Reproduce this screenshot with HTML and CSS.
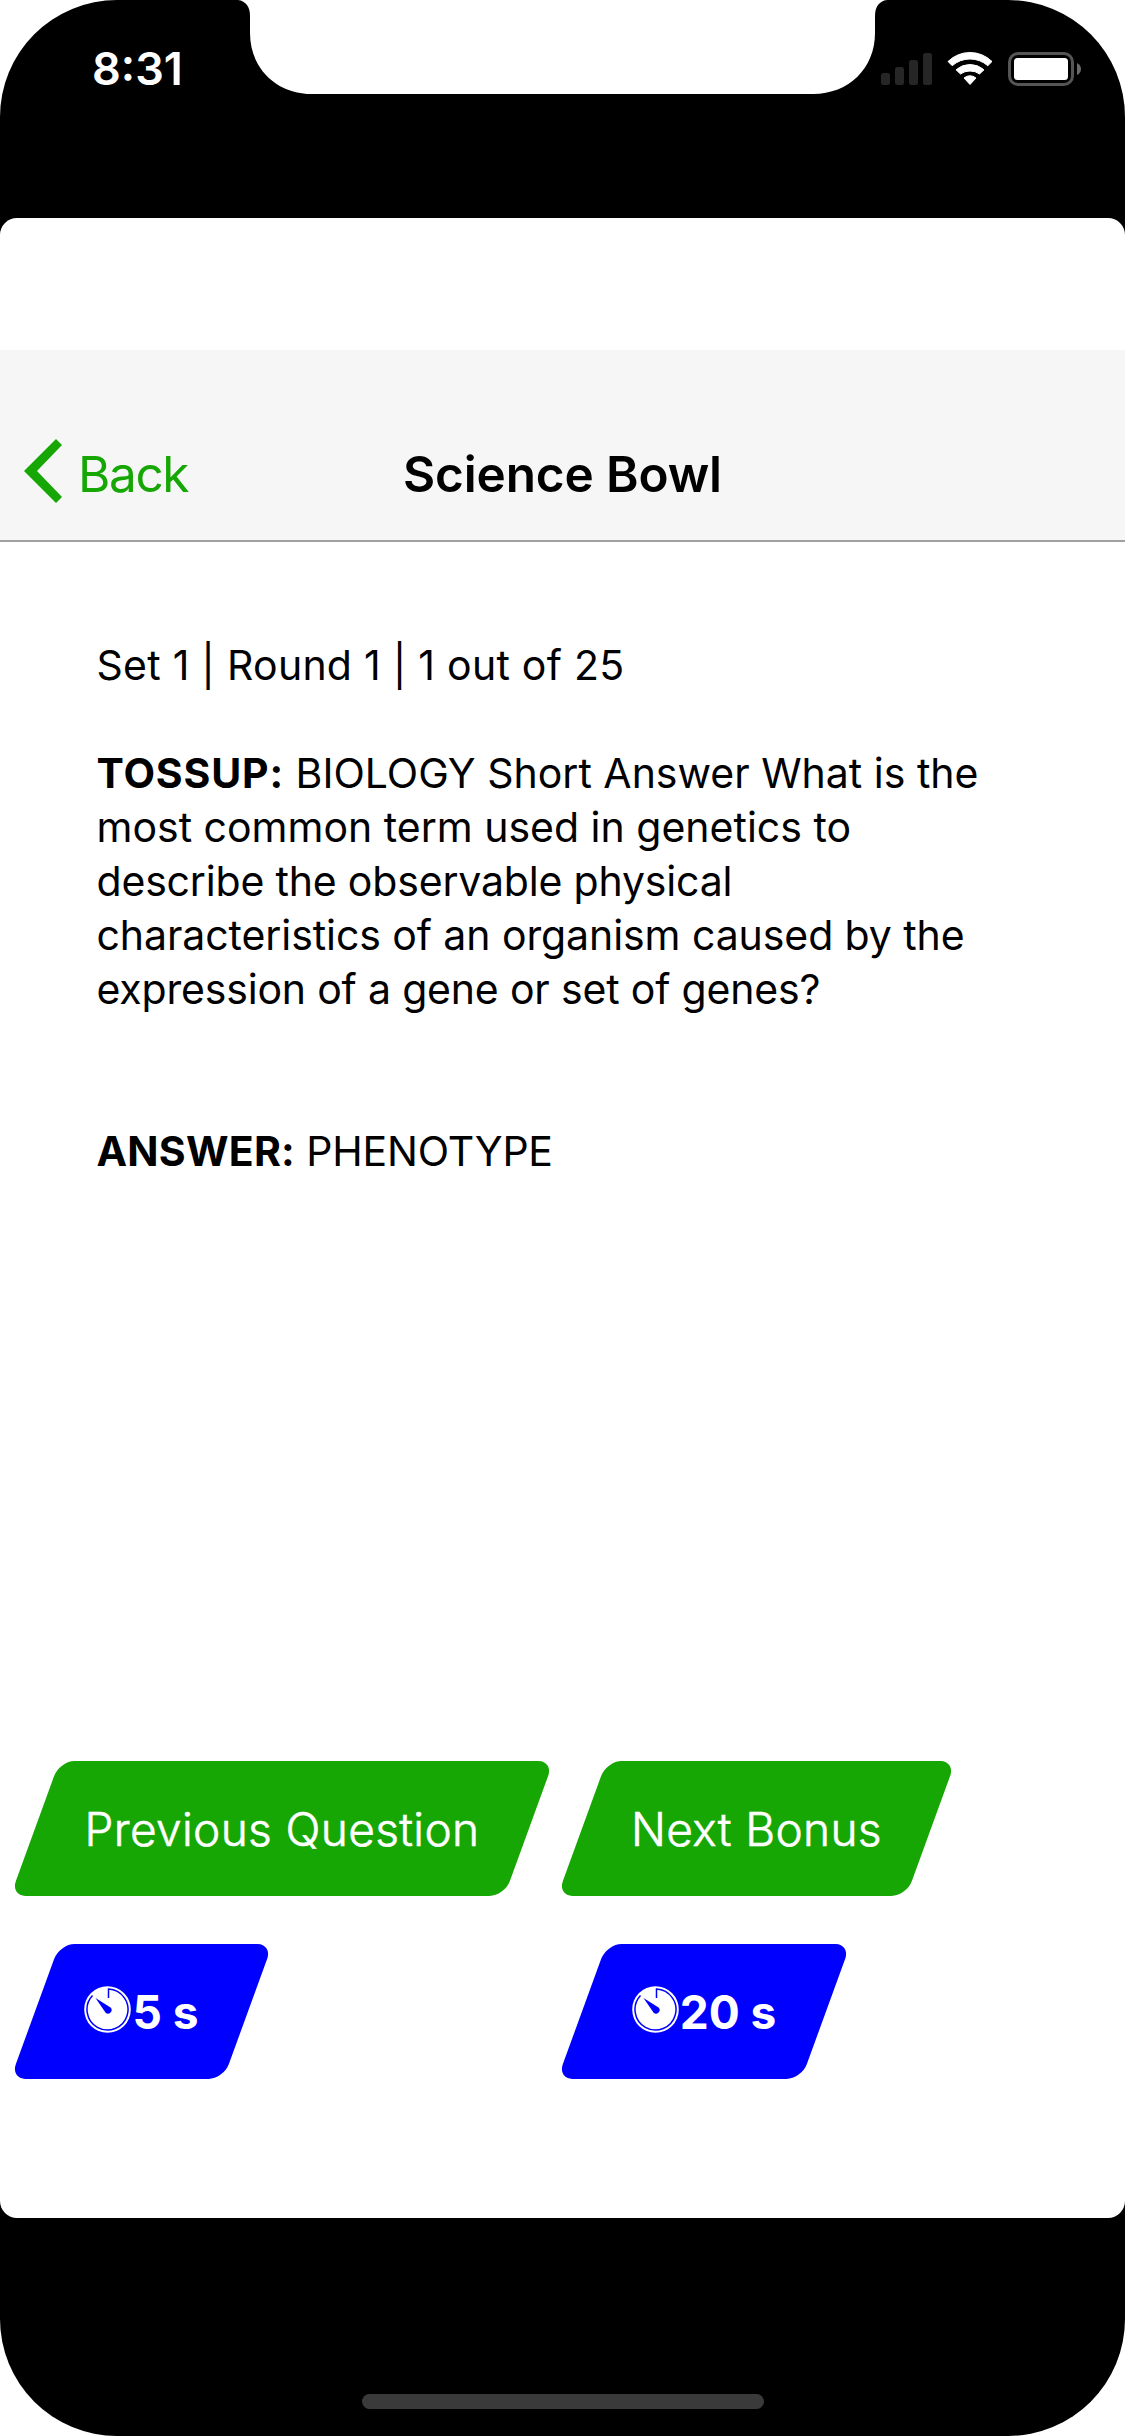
FILE: index.html
```html
<!DOCTYPE html>
<html lang="en">
<head>
<meta charset="utf-8">
<title>Science Bowl</title>
<link rel="stylesheet" href="styles.css">
</head>
<body>
<div class="phone">
  <svg class="notch" width="649" height="94" viewBox="0 0 649 94"><path d="M0 0C8 1 12 7 12 16V33C12 68 38 94 74 94H575C611 94 637 68 637 33V16C637 7 641 1 649 0Z" fill="#fff"/></svg>
  <header class="status">
    <span class="time">8:31</span>
    <div class="indicators">
      <svg class="signal" width="51" height="32" viewBox="0 0 51 32" fill="#262626"><rect y="20" width="9" height="12" rx="2.5"/><rect x="14" y="14" width="9" height="18" rx="2.5"/><rect x="28" y="7" width="9" height="25" rx="2.5"/><rect x="42" width="9" height="32" rx="2.5"/></svg>
      <svg class="wifi" width="46" height="34" viewBox="0 0 46 34" fill="#fff" stroke="#fff" stroke-width="1" stroke-linejoin="round"><path d="M1 9.5Q10.500 .5 23 .5T45 9.500L40.800 13.700Q33 7 23 7T5.200 13.700Z"/><path d="M9 17.800Q15 12.500 23 12.500T37 17.800L32.500 22Q28.500 19 23 19T13.500 22Z"/><path d="M17 26Q23 21.500 29 26L23 32.500Z"/></svg>
      <svg class="battery" width="74" height="34" viewBox="0 0 74 34"><rect x="1.500" y="1.500" width="63" height="31" rx="8.500" fill="none" stroke="#555" stroke-width="3"/><rect x="6" y="6" width="54" height="22" rx="3.500" fill="#fff"/><path d="M69 11Q73 13 73 17T69 23Z" fill="#6a6a6a"/></svg>
    </div>
  </header>
  <main class="app">
    <nav class="nav">
      <a class="back"><svg width="38" height="64" viewBox="0 0 38 64" fill="#17a705"><path d="M0 32L32 0L38 6L13 32L38 58L32 64Z"/></svg><span class="back-label">Back</span></a>
      <h1 class="title">Science Bowl</h1>
    </nav>
    <section class="question">
      <p class="meta">Set 1 | Round 1 | 1 out of 25</p>
      <p class="body"><b>TOSSUP:</b> BIOLOGY Short Answer What is the<br>most common term used in genetics to<br><span class="tight">describe the observable physical</span><br><span class="snug">characteristics of an organism caused by the</span><br><span class="tight">expression of a gene or set of genes?</span></p>
      <p class="answer"><b>ANSWER:</b> PHENOTYPE</p>
    </section>
    <section class="actions">
      <button class="btn prev"><span>Previous Question</span></button>
      <button class="btn next"><span>Next Bonus</span></button>
      <button class="btn timer five"><svg class="clock" width="47" height="47" viewBox="0 0 47 47"><circle cx="23.500" cy="23.500" r="23.300" fill="#fff"/><path d="M24.500 12V3A20.500 20.500 0 1 1 8.500 9.500" fill="none" stroke="#00f" stroke-width="1.500"/><path d="M11.500 12L26.500 21.500A3.300 3.300 0 0 1 21.500 26.500Z" fill="#00f"/></svg><span>5 s</span></button>
      <button class="btn timer twenty"><svg class="clock" width="47" height="47" viewBox="0 0 47 47"><circle cx="23.500" cy="23.500" r="23.300" fill="#fff"/><path d="M24.500 12V3A20.500 20.500 0 1 1 8.500 9.500" fill="none" stroke="#00f" stroke-width="1.500"/><path d="M11.500 12L26.500 21.500A3.300 3.300 0 0 1 21.500 26.500Z" fill="#00f"/></svg><span>20 s</span></button>
    </section>
  </main>
  <footer class="home"><div class="home-bar"></div></footer>
</div>
</body>
</html>
```
FILE: styles.css
```css
* { box-sizing: border-box; }
body { margin: 0; background: #fff; color: #000; font-family: Inter, "Liberation Sans", sans-serif; }
.phone { position: relative; display: flex; flex-direction: column; width: 1125px; height: 2436px; overflow: hidden; border-radius: 117px; background: #000; }
.notch { position: absolute; top: 0; left: 238px; }
.status { display: flex; justify-content: space-between; align-items: flex-start; height: 218px; padding: 0 43px 0 92px; }
.time { margin-top: 42px; color: #fff; font-size: 45px; line-height: 54px; font-weight: 600; }
.indicators { display: flex; align-items: flex-start; padding-top: 52px; }
.signal { margin-top: 1px; }
.wifi { margin-left: 15px; }
.battery { margin-left: 15px; }
.app { display: flex; flex-direction: column; height: 2000px; border-radius: 17px; background: #fff; }
.nav { display: grid; grid-template-columns: 1fr auto 1fr; align-items: start; height: 192px; margin-top: 132px; padding: 89px 24px 0; background: #f6f6f6; border-bottom: 2px solid #a0a0a0; }
.back { display: flex; color: #17a705; font-size: 49.5px; line-height: 60px; letter-spacing: -1.4px; }
.back-label { margin: 5px 0 0 16px; }
.title { margin: 5px 0 0; font-size: 49.5px; line-height: 60px; font-weight: 600; letter-spacing: -.15px; }
.question { height: 1219px; padding: 96px 96.5px 0; font-size: 41px; line-height: 54px; white-space: nowrap; }
.question p { margin: 0 0 54px; }
.question .meta { letter-spacing: .25px; }
.question .answer { margin-top: 108px; letter-spacing: -.2px; }
.question b { font-weight: 700; }
.body b { letter-spacing: .85px; }
.answer b { letter-spacing: .25px; }
.tight { letter-spacing: -.18px; }
.snug { letter-spacing: -.08px; }
.actions { display: grid; grid-template-columns: 547px 1fr; row-gap: 48px; padding-left: 35px; }
.btn { position: relative; z-index: 0; display: flex; align-items: center; justify-content: center; height: 135px; padding: 0; border: 0; background: none; color: #fff; font: 300 46px/56px Inter, "Liberation Sans", sans-serif; letter-spacing: .35px; -webkit-text-stroke: .6px #fff; white-space: nowrap; }
.btn::before { content: ""; position: absolute; z-index: -1; inset: 0; border-radius: 15px; background: #17a705; transform: skewX(-20deg); }
.timer { font-weight: 700; letter-spacing: 0; -webkit-text-stroke: 0; }
.timer::before { background: #00f; }
.clock { margin: -4px 1px 0 0; }
.prev { width: 494px; }
.next { width: 349px; }
.five { width: 213px; }
.twenty { width: 244px; }
.home { display: flex; justify-content: center; padding-top: 176px; }
.home-bar { width: 402px; height: 15px; border-radius: 8px; background: #3a3a3a; }
```
